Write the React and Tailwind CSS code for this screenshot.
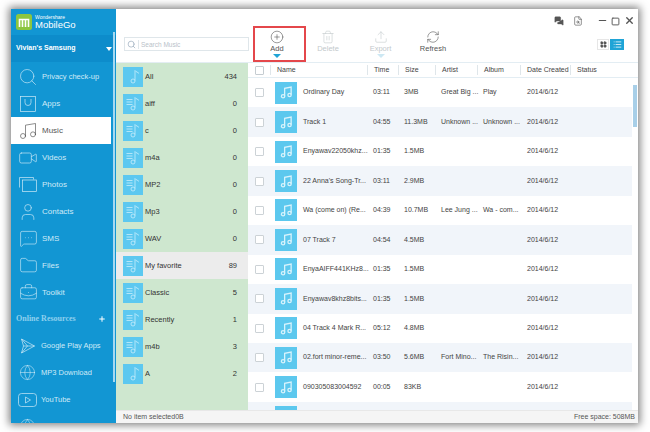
import React from "react";
import {
  Search,
  Music,
  Video,
  User,
  MessageSquareMore,
  Folder,
  BriefcaseBusiness,
  Globe,
  Plus,
  Trash2,
  Upload,
  RefreshCw,
  CirclePlus,
  Minus,
  Square,
  X,
  LayoutGrid,
  List,
  MessagesSquare,
  FileSearch,
} from "lucide-react";

const font = { fontFamily: '"Liberation Sans", Arial, sans-serif' };

function AppsIcon() {
  return (
    <svg width="16" height="16" viewBox="0 0 16 16" fill="none" stroke="currentColor" strokeWidth="0.7">
      <rect x="0.5" y="0.5" width="15" height="15" />
      <path d="M5 3v3.5a3 3 0 0 0 6 0V3" />
    </svg>
  );
}

function PhotosIcon() {
  return (
    <svg width="18" height="15" viewBox="0 0 18 15" fill="none" stroke="currentColor" strokeWidth="0.7">
      <path d="M0.5 10.5V0.5h14v2" />
      <rect x="3.5" y="3" width="14" height="11.5" />
    </svg>
  );
}

function PlayIcon() {
  return (
    <svg width="16" height="16" viewBox="0 0 16 16" fill="none" stroke="currentColor" strokeWidth="0.7">
      <path d="M1.5 1l13 7-13 7 2-7z" />
      <path d="M3.5 8l11 0M1.5 1l6 7-6 7" />
    </svg>
  );
}

function TubeIcon() {
  return (
    <svg width="19" height="14" viewBox="0 0 19 14" fill="none" stroke="currentColor" strokeWidth="0.7">
      <rect x="0.5" y="0.5" width="18" height="13" rx="3" />
      <path d="M7.5 4l5 3-5 3z" />
    </svg>
  );
}

function ListNote({ plain }) {
  return (
    <div className="flex h-5 w-5 items-center justify-center bg-[#5cc8f0]">
      <svg width="14" height="15" viewBox="0 0 14 15" fill="none" stroke="#c9eefb" strokeWidth="0.8">
        {!plain && <path d="M0.5 3.5h6M0.5 6h6M0.5 8.5h6" />}
        <path d="M9 11.5V1.5c1 1.6 3 1.6 4 3" />
        <circle cx="7" cy="12" r="2" />
      </svg>
    </div>
  );
}

function Thumb() {
  return (
    <div className="flex h-[22px] w-[22px] shrink-0 items-center justify-center bg-[#5cc8ee]">
      <svg width="13" height="13" viewBox="0 0 14 14" fill="none" stroke="#d8f3fc" strokeWidth="1.4">
        <path d="M5 11V2.5l7-1.4V9.5" />
        <circle cx="3.3" cy="11" r="1.8" />
        <circle cx="10.3" cy="9.7" r="1.8" />
      </svg>
    </div>
  );
}

const navItems = [
  { label: "Privacy check-up", icon: <Search size={20} strokeWidth={0.8} />, small: true },
  { label: "Apps", icon: <AppsIcon /> },
  { label: "Music", icon: <Music size={20} strokeWidth={0.8} />, active: true },
  { label: "Videos", icon: <Video size={20} strokeWidth={0.8} /> },
  { label: "Photos", icon: <PhotosIcon /> },
  { label: "Contacts", icon: <User size={20} strokeWidth={0.8} /> },
  { label: "SMS", icon: <MessageSquareMore size={19} strokeWidth={0.8} /> },
  { label: "Files", icon: <Folder size={19} strokeWidth={0.8} /> },
  { label: "Toolkit", icon: <BriefcaseBusiness size={19} strokeWidth={0.8} /> },
];

const onlineItems = [
  { label: "Google Play Apps", icon: <PlayIcon /> },
  { label: "MP3 Download", icon: <Globe size={17} strokeWidth={0.8} /> },
  { label: "YouTube", icon: <TubeIcon /> },
  { label: "", icon: <Globe size={17} strokeWidth={0.8} /> },
];

const playlists = [
  ["All", 434],
  ["aiff", 0],
  ["c", 0],
  ["m4a", 0],
  ["MP2", 0],
  ["Mp3", 0],
  ["WAV", 0],
  ["My favorite", 89],
  ["Classic", 5],
  ["Recently", 1],
  ["m4b", 3],
  ["A", 2],
];

const tracks = [
  ["Ordinary Day", "03:11", "3MB", "Great Big ...", "Play"],
  ["Track 1", "04:55", "11.3MB", "Unknown ...", "Unknown ..."],
  ["Enyawav22050khz...", "01:35", "1.5MB", "", ""],
  ["22 Anna's Song-Tr...", "03:11", "2.9MB", "", ""],
  ["Wa (come on) (Re...", "04:39", "10.7MB", "Lee Jung ...", "Wa - com..."],
  ["07 Track 7", "04:54", "4.5MB", "", ""],
  ["EnyaAIFF441KHz8...", "01:35", "1.5MB", "", ""],
  ["Enyawav8khz8bits...", "01:35", "1.5MB", "", ""],
  ["04 Track 4 Mark R...", "05:12", "4.8MB", "", ""],
  ["02.fort minor-reme...", "03:50", "5.6MB", "Fort Mino...", "The Risin..."],
  ["090305083004592", "00:05", "83KB", "", ""],
  ["", "", "", "", ""],
];

const columns = [
  ["Name", "w-[97px]"],
  ["Time", "w-[31px]"],
  ["Size", "w-[37px]"],
  ["Artist", "w-[42px]"],
  ["Album", "w-[43px]"],
  ["Date Created", "w-[50px]"],
  ["Status", "w-[60px]"],
];

function ToolButton({ label, icon, disabled, arrow }) {
  return (
    <div className={`flex w-11 flex-col items-center ${disabled ? "text-[#c3c9cc]" : "text-[#555]"}`}>
      <div className="flex h-[14px] items-center">{icon}</div>
      <span className="text-[7.5px] leading-[9px]">{label}</span>
      {arrow && <div className={`mt-[1px] h-0 w-0 border-x-[4px] border-t-[4px] border-x-transparent ${arrow}`} />}
    </div>
  );
}

export default function App() {
  return (
    <div className="h-[432px] w-[650px] overflow-hidden bg-white pl-[11px] pt-[9px]" style={font}>
      <div className="flex h-[414px] w-[627px] bg-white shadow-[0_0_8px_2px_rgba(0,0,0,0.5)]">
        {/* left nav */}
        <div className="relative w-[105px] shrink-0 overflow-hidden bg-[#1296d3] text-[#cfeaf7]">
          <div className="flex h-[26px] items-center gap-[3px] pl-[5px]">
            <svg width="16" height="16" viewBox="0 0 16 16">
              <rect width="16" height="16" rx="2.5" fill="#8cc63f" />
              <path d="M3.5 13V5.5h9V13M6.5 13V6M9.5 13V6" fill="none" stroke="#fff" strokeWidth="1.6" />
            </svg>
            <div className="text-white">
              <div className="text-[5px] leading-[6px]">Wondershare</div>
              <div className="text-[9.5px] leading-[10px]">MobileGo</div>
            </div>
          </div>
          <div className="flex h-[27px] items-center justify-between bg-[#0d8ccb] pl-[5px] pr-[4px] text-[7px] font-bold text-white">
            <span>Vivian's Samsung</span>
            <div className="h-0 w-0 border-x-[3.5px] border-t-[4px] border-x-transparent border-t-white" />
          </div>
          <div className="w-[100px] pt-[1px]">
            {navItems.map((item) => (
              <div
                key={item.label}
                className={`flex h-[27px] items-center ${item.active ? "bg-white text-[#555]" : ""}`}
              >
                <div className="flex w-[31px] justify-center pl-[3px]">{item.icon}</div>
                <span className={`${item.small ? "text-[7.5px]" : "text-[8px]"} leading-none`}>{item.label}</span>
              </div>
            ))}
            <div className="flex h-[26px] items-center justify-between pl-[5px] pr-[5px] font-bold text-[#8fd0ee]">
              <span style={{ fontFamily: '"Liberation Serif", serif' }} className="text-[8px]">Online Resources</span>
              <Plus size={8} strokeWidth={3} className="text-white" />
            </div>
            {onlineItems.map((item, i) => (
              <div key={i} className="flex h-[27px] items-center">
                <div className="flex w-[30px] justify-center pl-[3px]">{item.icon}</div>
                <span className="text-[7.5px] leading-none">{item.label}</span>
              </div>
            ))}
          </div>
          {/* sidebar scrollbar */}
          <div className="absolute bottom-[41px] right-[1px] top-[23px] w-[2px] bg-[#a5d9f1]" />
        </div>

        {/* main */}
        <div className="flex min-w-0 flex-1 flex-col">
          <div className="flex h-[17px] items-end justify-end pr-[3px] text-[#555]">
            <MessagesSquare size={10} fill="#555" strokeWidth={1} className="mr-[9px]" />
            <FileSearch size={10} strokeWidth={1.5} className="mr-[14px]" />
            <Minus size={11} strokeWidth={2.5} className="mr-[3px]" />
            <Square size={9} strokeWidth={2.5} className="mr-[4px]" />
            <X size={11} strokeWidth={3} />
          </div>
          <div className="flex h-[37px] border-b border-[#e3edf3]">
            <div className="ml-[8px] mt-[11px] flex h-[14px] w-[125px] items-center gap-[2px] border border-[#dfe6ea] pl-[2px] text-[#b9c2c9]">
              <Search size={9} className="text-[#9fb0c0]" />
              <span className="border-l border-[#dfe6ea] pl-[2px] text-[6.5px] leading-[9px]">Search Music</span>
            </div>
            <div className="ml-[4px] flex w-[53px] justify-center border-2 border-[#e4474b] pr-[5px] pt-[2px]">
              <ToolButton label="Add" icon={<CirclePlus size={14} strokeWidth={1} />} arrow="border-t-[#1fa4d6]" />
            </div>
            <div className="flex gap-[8.5px] pt-[4px]">
              <ToolButton label="Delete" disabled icon={<Trash2 size={14} strokeWidth={1} />} />
              <ToolButton label="Export" disabled icon={<Upload size={14} strokeWidth={1} />} arrow="border-t-[#cde8f3]" />
              <ToolButton label="Refresh" icon={<RefreshCw size={14} strokeWidth={1} />} />
            </div>
            <div className="ml-auto mr-[14px] mt-[13px] flex h-[11px]">
              <div className="flex w-[12px] items-center justify-center border border-[#e6e6e6] text-[#555]">
                <LayoutGrid size={7} fill="#555" />
              </div>
              <div className="ml-[1px] flex w-[14px] items-center justify-center bg-[#1fa4d6] text-white">
                <List size={9} strokeWidth={2} />
              </div>
            </div>
          </div>

          <div className="flex min-h-0 flex-1">
            {/* playlists */}
            <div className="w-[132px] shrink-0 overflow-hidden bg-[#cee7cf] text-[7.5px] text-[#333]">
              {playlists.map(([name, count], i) => (
                <div key={name} className={`flex h-[27px] items-center pl-[7px] pr-[11px] ${name === "My favorite" ? "bg-[#ececec]" : ""}`}>
                  <ListNote plain={i === 0 || name === "A"} />
                  <span className="ml-[2px]">{name}</span>
                  <span className="ml-auto">{count}</span>
                </div>
              ))}
            </div>

            {/* track table */}
            <div className="relative min-w-0 flex-1 overflow-hidden text-[7px] text-[#444]">
              <div className="flex h-[15px] items-center border-b border-[#e3edf3]">
                <div className="w-[22px] pl-[7px]">
                  <div className="h-[9px] w-[9px] rounded-[1px] border border-[#c5ccd1] bg-white" />
                </div>
                {columns.map(([title, width]) => (
                  <div key={title} className={`${width} whitespace-nowrap border-l border-[#dfe6ea] pl-[6px] leading-[10px]`}>
                    {title}
                  </div>
                ))}
              </div>
              <div className="w-[384px]">
                {tracks.map((t, i) => (
                  <div key={i} className={`flex h-[29.45px] items-center ${i % 2 ? "bg-[#f1f5fa]" : ""}`}>
                    <div className="w-[27px] pl-[7px]">
                      <div className="h-[9px] w-[9px] rounded-[1px] border border-[#ccd2d6] bg-white" />
                    </div>
                    <Thumb />
                    <span className="ml-[6px] w-[70px] whitespace-nowrap">{t[0]}</span>
                    <span className="w-[31px]">{t[1]}</span>
                    <span className="w-[37px]">{t[2]}</span>
                    <span className="w-[42px] whitespace-nowrap">{t[3]}</span>
                    <span className="w-[44px] whitespace-nowrap">{t[4]}</span>
                    <span>{i < 11 ? "2014/6/12" : ""}</span>
                  </div>
                ))}
              </div>
              {/* table scrollbar */}
              <div className="absolute right-[1px] top-[22px] h-[42px] w-[4px] bg-[#a8cfe8]" />
            </div>
          </div>

          <div className="flex h-[13px] shrink-0 items-center justify-between border-t border-[#e8e8e8] bg-[#f5f5f5] pl-[7px] pr-[3px] text-[7px] text-[#555]">
            <span>No item selected0B</span>
            <span>Free space: 508MB</span>
          </div>
        </div>
      </div>
    </div>
  );
}
